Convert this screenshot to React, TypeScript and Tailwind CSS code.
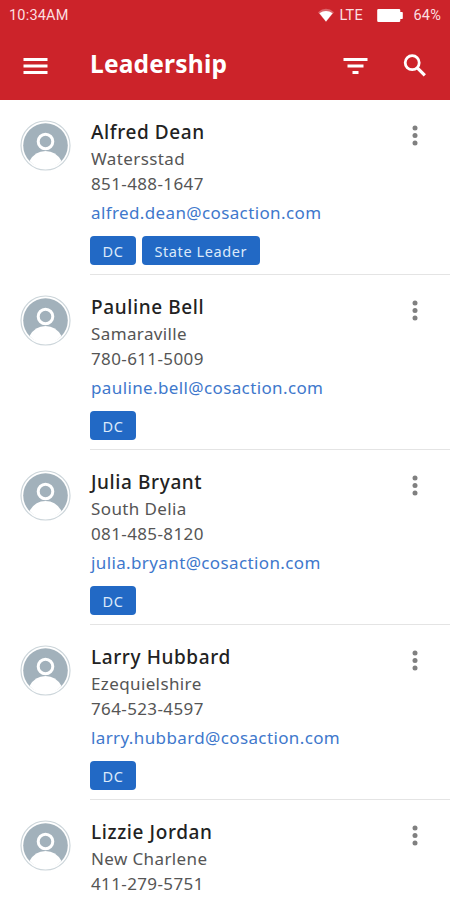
type Contact = {
  name: string
  city: string
  phone: string
  email?: string
  tags?: string[]
}

const contacts: Contact[] = [
  { name: 'Alfred Dean', city: 'Watersstad', phone: '851-488-1647', email: 'alfred.dean@cosaction.com', tags: ['DC', 'State Leader'] },
  { name: 'Pauline Bell', city: 'Samaraville', phone: '780-611-5009', email: 'pauline.bell@cosaction.com', tags: ['DC'] },
  { name: 'Julia Bryant', city: 'South Delia', phone: '081-485-8120', email: 'julia.bryant@cosaction.com', tags: ['DC'] },
  { name: 'Larry Hubbard', city: 'Ezequielshire', phone: '764-523-4597', email: 'larry.hubbard@cosaction.com', tags: ['DC'] },
  { name: 'Lizzie Jordan', city: 'New Charlene', phone: '411-279-5751' },
]

function StatusBar() {
  return (
    <div className="flex h-[31px] items-center pl-[9px] pr-[9px] font-[Roboto,sans-serif] text-[14.5px] tracking-[0.2px] text-[#fbdfe0]">
      <span className="flex-1">10:34AM</span>
      <svg className="h-[15px] w-[18px]" viewBox="0 0 18 15">
        <path d="M1 4.2Q9-2.6 17 4.2L9 14z" fill="#fff" opacity=".3" />
        <path d="M2.4 5.2Q9 .6 15.6 5.2L9 13.6z" fill="#fff" />
      </svg>
      <span className="ml-[4px] w-[25px]">LTE</span>
      <svg className="ml-[13px] h-[13px] w-[26px]" viewBox="0 0 26 13">
        <path d="M1.5 0H22q1.3 0 1.3 1.3V3H25q.8 0 .8.8v5.4q0 .8-.8.8h-1.7v1.7Q23.3 13 22 13H1.5Q.2 13 .2 11.7V1.3Q.2 0 1.5 0z" fill="#fff" />
      </svg>
      <span className="ml-[10px]">64%</span>
    </div>
  )
}

function Header() {
  return (
    <header className="h-[100px] shrink-0 bg-[#cc232a] text-white">
      <StatusBar />
      <div className="flex h-[69px] items-center pl-[23px] pr-[23px]">
        <button aria-label="Menu">
          <svg className="h-[18px] w-[25px]" viewBox="0 0 25 18" fill="#fff">
            <path d="M.5 1h24v3H.5zM.5 7.5h24v3H.5zM.5 14h24v3H.5z" />
          </svg>
        </button>
        <h1 className="-mt-[3px] ml-[42px] flex-1 text-[24.5px] leading-[30px] font-bold tracking-[0.2px]">Leadership</h1>
        <button aria-label="Filter">
          <svg className="h-[18px] w-[25px]" viewBox="0 0 25 18" fill="#fff">
            <path d="M.5 1h24v3H.5zM4.5 7.5h16v3h-16zM9.5 14h6v3h-6z" />
          </svg>
        </button>
        <button aria-label="Search" className="ml-[35px]">
          <svg className="h-[24px] w-[24px]" viewBox="0 0 24 24" fill="none" stroke="#fff">
            <circle cx="9.2" cy="8.7" r="7" strokeWidth="2.8" />
            <path d="M14.3 13.8l7.5 7.5" strokeWidth="3.2" />
          </svg>
        </button>
      </div>
    </header>
  )
}

function Avatar() {
  return (
    <svg className="mt-[20px] h-[51px] w-[51px] shrink-0" viewBox="0 0 51 51">
      <circle cx="25.5" cy="25.5" r="24.5" fill="#fff" stroke="#ccd5da" strokeWidth="1.2" />
      <circle cx="25.5" cy="25.5" r="22.3" fill="#a2b1bb" />
      <path d="M9.5 41Q15 31 25.5 31T41.5 41Q35 48.5 25.5 48.5T9.5 41z" fill="#fff" />
      <circle cx="25.5" cy="21.5" r="7.3" fill="#a2b1bb" stroke="#fff" strokeWidth="3" />
    </svg>
  )
}

function ContactRow({ contact }: { contact: Contact }) {
  return (
    <li className="flex h-[175px] shrink-0 pl-[20px]">
      <Avatar />
      <div className="ml-[19px] flex flex-1 border-b border-[#e4e4e4] pt-[19px]">
        <div className="flex-1 pl-px text-[17px] leading-[25px] tracking-[0.38px] whitespace-nowrap text-[#555]">
          <h2 className="text-[19px] leading-[27px] font-medium tracking-[0.6px] text-[#222]">{contact.name}</h2>
          <p>{contact.city}</p>
          <p>{contact.phone}</p>
          {contact.email && <p className="mt-[4px] text-[#4078cc]">{contact.email}</p>}
          {contact.tags && (
            <div className="-ml-px mt-[11px] flex gap-[6px]">
              {contact.tags.map((tag) => (
                <span key={tag} className="h-[29px] rounded-[4px] bg-[#2269c5] px-[12.5px] text-[14.5px] leading-[30px] tracking-[0.6px] text-[#dce9fa]">{tag}</span>
              ))}
            </div>
          )}
        </div>
        <button aria-label="More" className="mt-[5px] mr-[31px] h-[24px] w-[8px]">
          <svg className="h-[24px] w-[8px]" viewBox="0 0 8 24" fill="#808080">
            <circle cx="4" cy="4" r="2.5" />
            <circle cx="4" cy="11.5" r="2.5" />
            <circle cx="4" cy="19" r="2.5" />
          </svg>
        </button>
      </div>
    </li>
  )
}

export default function App() {
  return (
    <div className="flex h-[900px] w-[450px] flex-col overflow-hidden bg-white font-['Noto_Sans','Open_Sans',sans-serif]">
      <Header />
      <ul className="flex flex-col">
        {contacts.map((c) => (
          <ContactRow key={c.name} contact={c} />
        ))}
      </ul>
    </div>
  )
}
